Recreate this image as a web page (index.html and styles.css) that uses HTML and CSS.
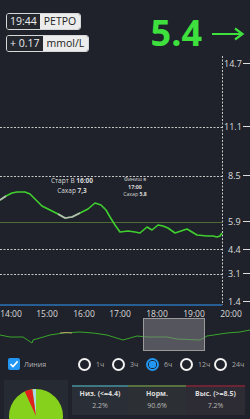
FILE: index.html
```html
<!DOCTYPE html>
<html lang="ru">

<head>
    <meta charset="UTF-8">
    <meta name="viewport" content="width=device-width, initial-scale=1.0">
    <title>Глюкоза</title>
    <link rel="stylesheet" href="styles.css">
</head>

<body>

    <div class="header">
        <div class="badges">
            <div class="badge"><span class="dark">19:44</span><span class="light">РЕТРО</span></div>
            <div class="badge"><span class="dark">+ 0.17</span><span class="light">mmol/L</span></div>
        </div>
        <div class="reading">
            <span class="value">5.4</span>
            <svg class="arrow" width="34" height="14" viewBox="0 0 34 14">
                <path d="M1 7 H31 M24 1.5 L31.5 7 L24 12.5" fill="none" stroke="#3de03d" stroke-width="2.2" />
            </svg>
        </div>
    </div>

    <svg class="chart" width="250" height="262" viewBox="0 56 250 262">
        <!-- сетка -->
        <g stroke="#c8c8c8" stroke-width="1" stroke-dasharray="2 1.5">
            <line x1="0" y1="127.5" x2="222" y2="127.5" />
            <line x1="0" y1="176.5" x2="222" y2="176.5" />
            <line x1="0" y1="249.5" x2="222" y2="249.5" />
            <line x1="0" y1="274.5" x2="222" y2="274.5" />
            <line x1="222.5" y1="56" x2="222.5" y2="305" />
        </g>
        <line x1="0" y1="222.5" x2="222" y2="222.5" stroke="#4f6d37" stroke-width="1" />
        <line x1="0" y1="305" x2="222" y2="305" stroke="#2b74b8" stroke-width="1.5" />

        <!-- ось Y -->
        <g class="ylab" font-size="9" fill="#dcdcdc">
            <text x="224" y="67">14.7</text>
            <text x="224" y="130">11.1</text>
            <text x="228" y="179">8.5</text>
            <text x="228" y="225">5.9</text>
            <text x="228" y="253">4.4</text>
            <text x="228" y="277">3.1</text>
            <text x="228" y="304.5">1.4</text>
        </g>
        <g stroke="#dcdcdc" stroke-width="1">
            <line x1="243" y1="63.5" x2="250" y2="63.5" />
            <line x1="243" y1="126.5" x2="250" y2="126.5" />
            <line x1="243" y1="175.5" x2="250" y2="175.5" />
            <line x1="243" y1="221.5" x2="250" y2="221.5" />
            <line x1="243" y1="249.5" x2="250" y2="249.5" />
            <line x1="243" y1="273.5" x2="250" y2="273.5" />
            <line x1="243" y1="301.5" x2="250" y2="301.5" />
        </g>

        <!-- ось X -->
        <g font-size="8.5" fill="#dcdcdc" text-anchor="middle">
            <text x="11" y="316.5">14:00</text>
            <text x="47" y="316.5">15:00</text>
            <text x="84" y="316.5">16:00</text>
            <text x="120" y="316.5">17:00</text>
            <text x="157" y="316.5">18:00</text>
            <text x="194" y="316.5">19:00</text>
            <text x="231" y="316.5">20:00</text>
        </g>

        <!-- кривая -->
        <polyline fill="none" stroke="#3fcf2f" stroke-width="1.6" stroke-linejoin="round"
            points="0,200 6,196 12,193 17,192 25,192 30,194 36,200 42,206 50,210 58,214 65,218 72,217 80,213 88,209 95,203 101,205 106,210 110,217 115,225 120,232 128,231 135,232 140,233 147,227 152,230 158,225 163,226 168,228 175,233 181,231 187,229 192,232 197,235 207,236 213,236 217,237 220,236 222,233" />
        <g fill="none" stroke="#b8b8b8" stroke-width="1.6" stroke-linejoin="round">
            <polyline points="0,200 6,196" />
            <polyline points="58,214 65,218 72,217 80,213" />
        </g>

        <!-- подписи -->
        <g text-anchor="middle" fill="#d8d8d8">
            <text x="72" y="183" font-size="6.5">Старт В <tspan font-weight="bold">16:00</tspan></text>
            <text x="72" y="193" font-size="6.5">Сахар <tspan font-weight="bold">7,3</tspan></text>
            <text x="135" y="181" font-size="5">Финиш в</text>
            <text x="135" y="189" font-size="5.4" font-weight="bold">17:00</text>
            <text x="135" y="196" font-size="5.2">Сахар <tspan font-weight="bold">5,8</tspan></text>
        </g>
    </svg>

    <svg class="navigator" width="250" height="34" viewBox="0 318 250 34">
        <polyline fill="none" stroke="#3aa52c" stroke-width="1"
            points="0,335 10,337 23,337 32,343 33,340 50,335 63,333 80,332 93,333 107,335 123,340 130,338 137,336 147,337 167,337 177,339 200,340 207,336 227,333 240,332 250,330" />
        <polyline fill="none" stroke="#b9a36a" stroke-width="1" points="60,333 66,332.5 72,333" />
        <rect x="143.5" y="318.5" width="61" height="32" fill="rgba(130,130,134,0.55)" stroke="#9a9a9a" stroke-width="1" />
    </svg>

    <div class="controls">
        <label class="check">
            <span class="box">
                <svg width="10" height="10" viewBox="0 0 10 10">
                    <path d="M1.5 5.2 L4 7.6 L8.6 2.4" fill="none" stroke="#fff" stroke-width="1.6" />
                </svg>
            </span>
            <span class="check-text">Линия</span>
        </label>
        <div class="radios">
            <span class="radio"><span class="ring"></span>1ч</span>
            <span class="radio"><span class="ring"></span>3ч</span>
            <span class="radio active"><span class="ring"></span>6ч</span>
            <span class="radio"><span class="ring"></span>12ч</span>
            <span class="radio"><span class="ring"></span>24ч</span>
        </div>
    </div>

    <div class="stats">
        <div class="pie-box">
            <svg width="56" height="56" viewBox="0 0 56 56">
                <circle cx="28" cy="28" r="27" fill="#86d11c" />
                <path d="M28 28 L28 1 A27 27 0 0 0 24.3 1.25 Z" fill="#a8d8e6" />
                <path d="M28 28 L24.3 1.25 A27 27 0 0 0 16.7 3.5 Z" fill="#e0201c" />
            </svg>
        </div>
        <div class="table">
            <div class="cell low">
                <div class="th">Низ. (&lt;=4.4)</div>
                <div class="td">2.2%</div>
            </div>
            <div class="cell norm">
                <div class="th">Норм.</div>
                <div class="td">90.6%</div>
            </div>
            <div class="cell high">
                <div class="th">Выс. (&gt;=8.5)</div>
                <div class="td">7.2%</div>
            </div>
        </div>
    </div>

</body>

</html>
```

FILE: styles.css
```css
body {
    margin: 0;
    width: 250px;
    height: 419px;
    overflow: hidden;
    background-color: #1f222a;
    font-family: "Open Sans", "Noto Sans", sans-serif;
    color: #ddd;
}

.header {
    height: 56px;
    display: flex;
    flex-direction: row;
    justify-content: space-between;
    padding: 13px 5px 0 6px;
    box-sizing: border-box;
}

.badges {
    display: flex;
    flex-direction: column;
    align-items: flex-start;
    gap: 5px;
}

.badge {
    display: flex;
    height: 15px;
    border: 1px solid #d8d8d8;
    border-radius: 3px;
    overflow: hidden;
    font-size: 10.5px;
    line-height: 15px;
}

.badge .dark {
    padding: 0 3px;
    color: #eee;
    background-color: #24272e;
}

.badge .light {
    padding: 0 4px;
    color: #222;
    background-color: #ececec;
}

.reading {
    display: flex;
    align-items: center;
    gap: 9px;
    height: 34px;
    margin-top: 3px;
}

.reading .value {
    color: #3de03d;
    font-size: 36px;
    font-weight: bold;
    line-height: 1;
}

.arrow {
    display: block;
    margin-top: 2px;
}

.chart,
.navigator {
    display: block;
    font-family: "Open Sans", "Noto Sans", sans-serif;
}

.controls {
    height: 24px;
    display: flex;
    align-items: center;
    padding: 0 0 0 8px;
}

.check {
    display: flex;
    align-items: center;
    gap: 4px;
    width: 70px;
}

.box {
    width: 12px;
    height: 12px;
    background-color: #2196f3;
    border-radius: 2px;
    display: flex;
    align-items: center;
    justify-content: center;
}

.check-text {
    font-size: 7px;
    color: #b8b8b8;
}

.radios {
    display: flex;
    gap: 13px;
}

.radio {
    display: flex;
    align-items: center;
    gap: 5px;
    font-size: 7px;
    color: #a8a8a8;
    width: 21px;
}

.ring {
    width: 9px;
    height: 9px;
    border: 2px solid #f2f2f2;
    border-radius: 50%;
    flex: none;
}

.radio.active .ring {
    border-color: #2196f3;
    background: radial-gradient(circle, #2196f3 3.5px, #1f222a 4px);
}

.stats {
    display: flex;
    margin-top: 4px;
    padding-left: 4px;
    height: 41px;
}

.pie-box {
    width: 64px;
    background-color: #262a32;
    display: flex;
    justify-content: center;
    padding-top: 8px;
    box-sizing: border-box;
    overflow: hidden;
}

.table {
    display: flex;
    margin-left: 4px;
    padding-top: 5px;
}

.cell {
    background-color: #2a2e36;
    height: 28px;
    text-align: center;
    border-top: 2px solid;
}

.cell.low {
    width: 56px;
    border-color: #3e7882;
}

.cell.norm {
    width: 58px;
    border-color: #56703f;
    background-color: #2c3034;
}

.cell.high {
    width: 59px;
    border-color: #6f2435;
    background-color: #2d2c34;
}

.th {
    font-size: 7px;
    font-weight: bold;
    color: #dcdcdc;
    line-height: 13px;
}

.td {
    font-size: 7px;
    color: #b8b8b8;
    line-height: 12px;
}
```
